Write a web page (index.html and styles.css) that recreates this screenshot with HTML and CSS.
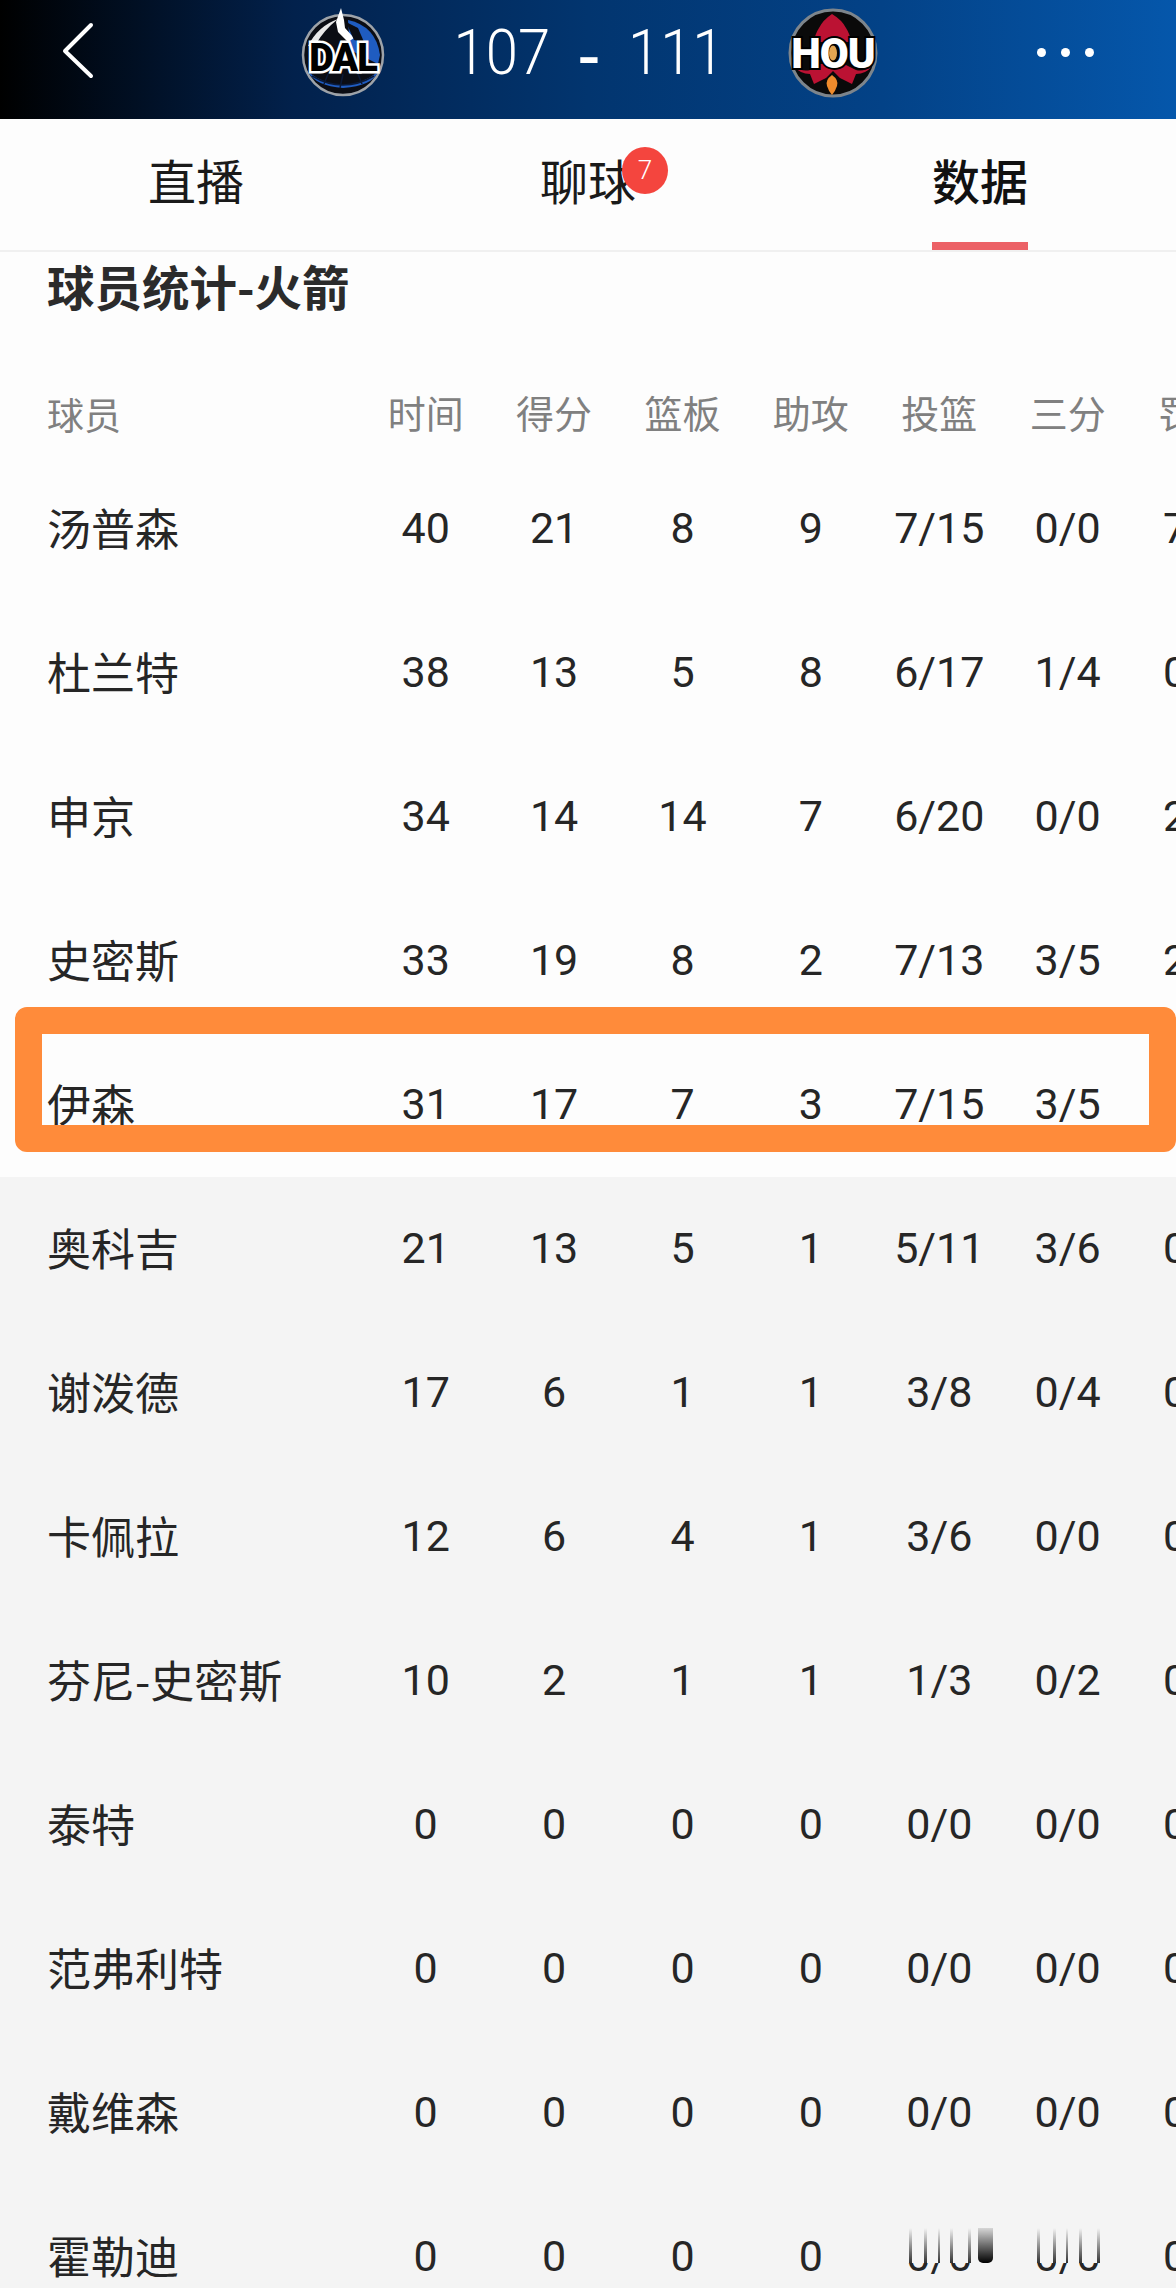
FILE: index.html
```html
<!DOCTYPE html>
<html lang="zh">
<head>
<meta charset="utf-8">
<title>球员统计</title>
<link rel="stylesheet" href="styles.css">
</head>
<body>
<div class="page">
  <header class="topbar">
    <svg class="back" width="288" height="119" viewBox="0 0 288 119"><path d="M91 25 L65 51 L91 76" fill="none" stroke="#fff" stroke-width="4" stroke-linecap="round" stroke-linejoin="round"/></svg>
    <svg class="logo" width="110" height="119" viewBox="0 0 110 119">
      <circle cx="55" cy="55" r="40" fill="#0b0d14" stroke="#9ea3a9" stroke-width="2.5"/>
      <path d="M60 20 Q88 26 92 55 L90 64 L62 50 Z" fill="#1f5cc0"/>
      <path d="M20 72 Q55 98 90 72 Q84 86 55 88 Q28 86 20 72 Z" fill="#1f5cc0"/>
      <path d="M24 76 Q55 94 86 76" fill="none" stroke="#0b1a38" stroke-width="1.5"/>
      <path d="M55 74 L52 88 M40 74 L36 84 M70 74 L74 84" stroke="#0b1a38" stroke-width="1.5"/>
      <path d="M20 46 Q30 26 50 19 Q36 30 28 44 Z" fill="#e8e8e8"/>
      <path d="M53 8 L56 20 L57 28 L66 38 L60 42 L50 32 L48 22 Z" fill="#fff"/>
      <path d="M58 22 L70 28 L76 42 L66 40 Z" fill="#0b0d14"/>
      <text class="logo-dal" x="55" y="71" text-anchor="middle">DAL</text>
    </svg>
    <div class="score"><span>107</span><span class="dash">-</span><span>111</span></div>
    <svg class="logo" width="118" height="119" viewBox="0 0 118 119">
      <circle cx="59" cy="53" r="43" fill="#0a0a0a" stroke="#7d858c" stroke-width="3"/>
      <path d="M58 14 Q68 20 72 28 Q76 34 77 42 L40 42 Q41 34 45 28 Q49 20 58 14 Z" fill="#bb1233"/>
      <path d="M20 66 Q28 72 36 70 L46 64 L70 64 L82 70 Q90 72 98 66 Q92 74 82 74 L78 84 L66 78 L59 71 L52 78 L40 84 L36 74 Q26 74 20 66 Z" fill="#bb1233"/>
      <path d="M58 75 Q65 80 63 86 Q61 92 58 95 Q55 92 53 86 Q51 80 58 75 Z" fill="#ef8b2c"/>
      <text class="logo-hou" x="59" y="68" text-anchor="middle">HOU</text>
      <ellipse cx="59" cy="53" rx="4" ry="7.5" fill="#e2a552"/>
    </svg>
    <div class="dots"><i></i><i></i><i></i></div>
  </header>

  <nav class="tabs">
    <div class="tab"><span class="tab-label">直播</span></div>
    <div class="tab"><span class="tab-label">聊球<b class="badge">7</b></span></div>
    <div class="tab tab-active"><span class="tab-label">数据</span></div>
  </nav>

  <main class="sheet">
    <h2 class="title">球员统计-火箭</h2>
    <div class="row row-head"><div class="name">球员</div><div class="cell">时间</div><div class="cell">得分</div><div class="cell">篮板</div><div class="cell">助攻</div><div class="cell">投篮</div><div class="cell">三分</div><div class="cell">罚球</div></div>

    <div class="row"><div class="name">汤普森</div><div class="cell">40</div><div class="cell">21</div><div class="cell">8</div><div class="cell">9</div><div class="cell">7/15</div><div class="cell">0/0</div><div class="cell">7/8</div></div>
    <div class="row"><div class="name">杜兰特</div><div class="cell">38</div><div class="cell">13</div><div class="cell">5</div><div class="cell">8</div><div class="cell">6/17</div><div class="cell">1/4</div><div class="cell">0/0</div></div>
    <div class="row"><div class="name">申京</div><div class="cell">34</div><div class="cell">14</div><div class="cell">14</div><div class="cell">7</div><div class="cell">6/20</div><div class="cell">0/0</div><div class="cell">2/4</div></div>
    <div class="row"><div class="name">史密斯</div><div class="cell">33</div><div class="cell">19</div><div class="cell">8</div><div class="cell">2</div><div class="cell">7/13</div><div class="cell">3/5</div><div class="cell">2/2</div></div>
    <div class="row"><div class="name">伊森</div><div class="cell">31</div><div class="cell">17</div><div class="cell">7</div><div class="cell">3</div><div class="cell">7/15</div><div class="cell">3/5</div><div class="cell">0/0</div><div class="highlight"></div></div>

    <div class="bench">
      <div class="row"><div class="name">奥科吉</div><div class="cell">21</div><div class="cell">13</div><div class="cell">5</div><div class="cell">1</div><div class="cell">5/11</div><div class="cell">3/6</div><div class="cell">0/0</div></div>
      <div class="row"><div class="name">谢泼德</div><div class="cell">17</div><div class="cell">6</div><div class="cell">1</div><div class="cell">1</div><div class="cell">3/8</div><div class="cell">0/4</div><div class="cell">0/0</div></div>
      <div class="row"><div class="name">卡佩拉</div><div class="cell">12</div><div class="cell">6</div><div class="cell">4</div><div class="cell">1</div><div class="cell">3/6</div><div class="cell">0/0</div><div class="cell">0/0</div></div>
      <div class="row"><div class="name">芬尼-史密斯</div><div class="cell">10</div><div class="cell">2</div><div class="cell">1</div><div class="cell">1</div><div class="cell">1/3</div><div class="cell">0/2</div><div class="cell">0/0</div></div>
      <div class="row"><div class="name">泰特</div><div class="cell">0</div><div class="cell">0</div><div class="cell">0</div><div class="cell">0</div><div class="cell">0/0</div><div class="cell">0/0</div><div class="cell">0/0</div></div>
      <div class="row"><div class="name">范弗利特</div><div class="cell">0</div><div class="cell">0</div><div class="cell">0</div><div class="cell">0</div><div class="cell">0/0</div><div class="cell">0/0</div><div class="cell">0/0</div></div>
      <div class="row"><div class="name">戴维森</div><div class="cell">0</div><div class="cell">0</div><div class="cell">0</div><div class="cell">0</div><div class="cell">0/0</div><div class="cell">0/0</div><div class="cell">0/0</div></div>
      <div class="row"><div class="name">霍勒迪</div><div class="cell">0</div><div class="cell">0</div><div class="cell">0</div><div class="cell">0</div><div class="cell">0/0</div><div class="cell">0/0</div><div class="cell">0/0</div>
        <div class="wm-fade"></div><div class="wm-bar"></div>
      </div>
    </div>
  </main>
</div>
</body>
</html>
```
FILE: styles.css
```css
* { box-sizing: border-box; }
html, body { margin: 0; padding: 0; background: #fdfdfd; }
.page {
  width: 1176px;
  height: 2288px;
  overflow: hidden;
  font-family: "Roboto", "Noto Sans CJK SC", sans-serif;
  color: #262626;
}
.topbar {
  height: 119px;
  display: grid;
  grid-template-columns: 288px 110px 376px 118px 1fr;
  align-items: center;
  background: linear-gradient(90deg, #000 0%, #02214c 25%, #02356f 50%, #034287 75%, #0557ab 100%);
}
.back, .logo { display: block; }
.logo-dal {
  font: 900 38px "Roboto", sans-serif;
  fill: #000;
  stroke: #fff;
  stroke-width: 5px;
  paint-order: stroke;
  letter-spacing: -1px;
}
.logo-hou {
  font: 900 42px "Roboto", sans-serif;
  fill: #fff;
  stroke: #000;
  stroke-width: 4px;
  paint-order: stroke;
  letter-spacing: -1px;
}
.score {
  display: flex;
  justify-content: center;
  align-items: center;
  gap: 29px;
  padding-left: 6px;
  margin-top: -16px;
  color: #fff;
  font-size: 58px;
  font-weight: 300;
  line-height: 60px;
  transform: scaleY(1.08);
}
.dash { font-size: 72px; font-weight: 400; margin-top: 13px; }
.dots {
  display: flex;
  gap: 15px;
  padding-left: 145px;
  margin-top: -14px;
}
.dots i {
  width: 9px;
  height: 9px;
  border-radius: 50%;
  background: #fff;
}
.tabs {
  height: 133px;
  display: grid;
  grid-template-columns: repeat(3, 1fr);
  border-bottom: 2px solid #f0f0f0;
  background: #fdfdfd;
}
.tab {
  display: flex;
  justify-content: center;
  font-size: 48px;
  line-height: 129px;
  color: #1a1a1a;
}
.tab-label {
  position: relative;
  display: block;
  height: 131px;
}
.tab-active .tab-label { font-weight: 500; color: #111; }
.tab-active .tab-label::after {
  content: "";
  position: absolute;
  left: 0;
  right: 0;
  bottom: 0;
  height: 8px;
  background: #ec6166;
}
.badge {
  position: absolute;
  left: 82px;
  top: 28px;
  width: 46px;
  height: 47px;
  border-radius: 50%;
  background: #f4453e;
  color: #fff;
  font-size: 26px;
  font-weight: 300;
  line-height: 46px;
  text-align: center;
}
.title {
  margin: 0 0 47px;
  padding-left: 47px;
  height: 74px;
  font-family: "Noto Sans CJK SC", sans-serif;
  font-size: 47.5px;
  font-weight: 700;
  line-height: 68px;
  color: #2b2b2b;
}
.row {
  position: relative;
  display: flex;
  align-items: center;
  height: 144px;
  padding-left: 47px;
  padding-bottom: 2px;
  font-size: 43px;
  line-height: 60px;
  white-space: nowrap;
}
.row-head {
  height: 84px;
  padding-bottom: 0;
  font-size: 38px;
  color: #808080;
}
.name {
  flex: 0 0 314.5px;
  margin-top: -3px;
  font-family: "Noto Sans CJK SC", sans-serif;
  font-size: 44px;
}
.row-head .name { font-size: 37px; }
.cell {
  flex: 0 0 128.4px;
  text-align: center;
}
.bench { background: #f4f4f4; }
.highlight {
  position: absolute;
  left: 15px;
  right: 0;
  top: -26px;
  height: 145px;
  border: 27px solid #ff8b3a;
  border-radius: 12px;
}
.wm-fade {
  position: absolute;
  left: 900px;
  top: 43px;
  width: 205px;
  height: 35px;
  background:
    linear-gradient(180deg, rgba(51, 51, 51, 0), #333) 8.7px 0 / 3px 100% no-repeat,
    linear-gradient(180deg, rgba(51, 51, 51, 0), #333) 24px 0 / 3px 100% no-repeat,
    linear-gradient(180deg, rgba(51, 51, 51, 0), #333) 38px 0 / 2px 100% no-repeat,
    linear-gradient(180deg, rgba(51, 51, 51, 0), #333) 50px 0 / 3px 100% no-repeat,
    linear-gradient(180deg, rgba(51, 51, 51, 0), #333) 68px 0 / 3px 100% no-repeat,
    linear-gradient(180deg, rgba(51, 51, 51, 0), #333) 136.7px 0 / 3px 100% no-repeat,
    linear-gradient(180deg, rgba(51, 51, 51, 0), #333) 153px 0 / 3px 100% no-repeat,
    linear-gradient(180deg, rgba(51, 51, 51, 0), #333) 166px 0 / 2px 100% no-repeat,
    linear-gradient(180deg, rgba(51, 51, 51, 0), #333) 178.7px 0 / 3px 100% no-repeat,
    linear-gradient(180deg, rgba(51, 51, 51, 0), #333) 196.7px 0 / 3px 100% no-repeat,
    #f4f4f4;
}
.wm-bar {
  position: absolute;
  left: 978px;
  top: 43px;
  width: 15px;
  height: 35px;
  background: linear-gradient(180deg, rgba(0, 0, 0, 0.12), #000);
  border-radius: 0 0 5px 5px;
}
```
